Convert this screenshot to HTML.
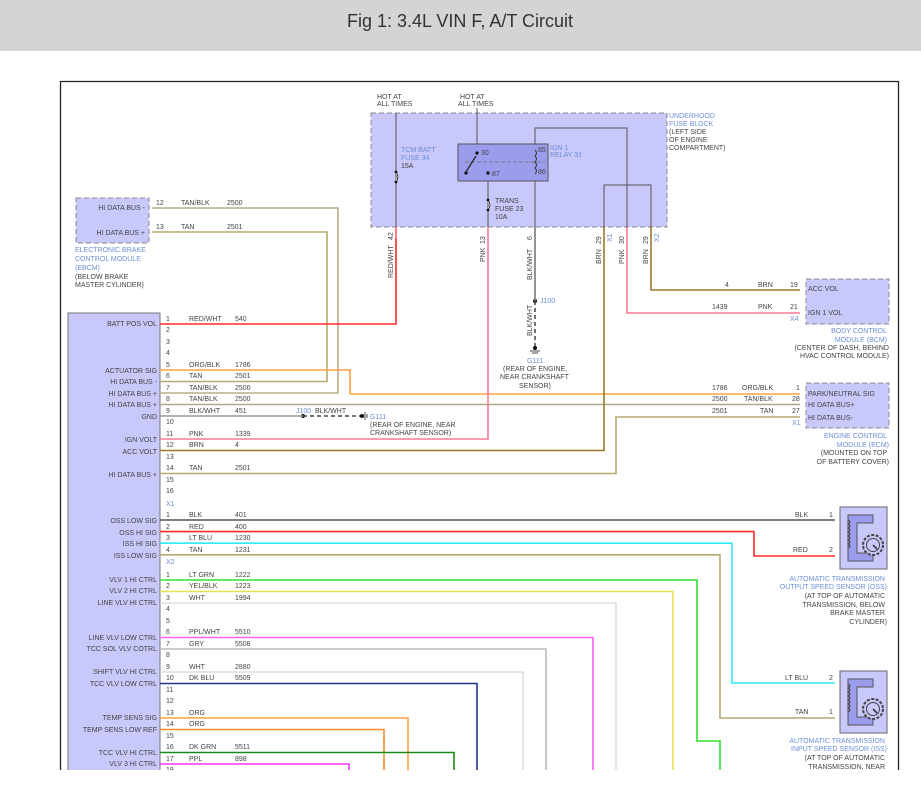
<!DOCTYPE html>
<html><head><meta charset="utf-8"><style>
html,body{margin:0;padding:0;background:#fff;width:921px;height:797px;overflow:hidden}
svg{display:block}
text{font-family:"Liberation Sans",Arial,sans-serif;font-size:7px;fill:#444}
.b{fill:#6b8fd6}
.t{font-size:18px;fill:#333}
</style></head><body>
<svg width="921" height="797" viewBox="0 0 921 797" xmlns="http://www.w3.org/2000/svg">
<rect x="0" y="0" width="921" height="51" fill="#d4d4d4"/>
<text x="460" y="27" text-anchor="middle" class="t">Fig 1: 3.4L VIN F, A/T Circuit</text>
<defs><clipPath id="c"><rect x="0" y="0" width="921" height="770"/></clipPath></defs>
<g clip-path="url(#c)">
<path d="M60.5 800 V81.5 H898.5 V800" fill="none" stroke="#222" stroke-width="1.3"/>

<!-- fuse block -->
<rect x="371" y="113" width="296" height="114" fill="#c8c8fa" stroke="#888" stroke-dasharray="5,3"/>
<text x="377" y="99" text-anchor="start">HOT AT</text><text x="377" y="106">ALL TIMES</text>
<text x="460" y="99">HOT AT</text><text x="458" y="106">ALL TIMES</text>
<text x="669" y="118" class="b">UNDERHOOD</text><text x="669" y="126" class="b">FUSE BLOCK</text><text x="669" y="134">(LEFT SIDE</text><text x="669" y="142">OF ENGINE</text><text x="669" y="150">COMPARTMENT)</text>
<rect x="458" y="144" width="90" height="37" fill="#9c9cec" stroke="#555"/>
<path d="M465 162 H545" stroke="#777" stroke-dasharray="4,2" fill="none"/>
<path d="M476 156 L466 172" stroke="#222" stroke-width="1.2"/>
<circle cx="477" cy="153" r="1.6" fill="#111"/><circle cx="466" cy="173" r="1.6" fill="#111"/><circle cx="488" cy="173" r="1.6" fill="#111"/>
<text x="481" y="155">30</text><text x="492" y="176">87</text><text x="538" y="152">85</text><text x="538" y="174">86</text>
<text x="550" y="150" class="b">IGN 1</text><text x="550" y="157" class="b">RELAY 31</text>
<path d="M535 150 q3 3 0 6 q3 3 0 6 q3 3 0 6 q3 3 0 6" stroke="#333" fill="none"/>
<g stroke="#555" fill="none" stroke-width="1">
<path d="M396 113 V227"/><path d="M477 108 V144"/><path d="M488 181 V227"/><path d="M535 144 V128 H627 V227"/><path d="M535 181 V227"/>
<path d="M604 227 V185 H651 V227"/>
</g>
<path d="M396 172 q4 5 0 10" stroke="#fff" stroke-width="2" fill="none"/>
<path d="M396 172 q4 5 0 10" stroke="#333" fill="none"/>
<circle cx="396" cy="172" r="1.4" fill="#111"/><circle cx="396" cy="182" r="1.4" fill="#111"/>
<text x="401" y="152" class="b">TCM BATT</text><text x="401" y="160" class="b">FUSE 34</text><text x="401" y="168">15A</text>
<path d="M488 200 q4 5 0 10" stroke="#fff" stroke-width="2" fill="none"/>
<path d="M488 200 q4 5 0 10" stroke="#333" fill="none"/>
<circle cx="488" cy="200" r="1.4" fill="#111"/><circle cx="488" cy="210" r="1.4" fill="#111"/>
<text x="495" y="203">TRANS</text><text x="495" y="211">FUSE 23</text><text x="495" y="219">10A</text>
<g fill="#444"><text transform="translate(393,240) rotate(-90)">42</text><text transform="translate(393,278) rotate(-90)">RED/WHT</text>
<text transform="translate(485,244) rotate(-90)">13</text><text transform="translate(485,262) rotate(-90)">PNK</text>
<text transform="translate(532,240) rotate(-90)">6</text><text transform="translate(532,280) rotate(-90)">BLK/WHT</text>
<text transform="translate(601,244) rotate(-90)">29</text><text transform="translate(601,264) rotate(-90)">BRN</text>
<text transform="translate(624,244) rotate(-90)">30</text><text transform="translate(624,264) rotate(-90)">PNK</text>
<text transform="translate(648,244) rotate(-90)">29</text><text transform="translate(648,264) rotate(-90)">BRN</text>
<text transform="translate(612,242) rotate(-90)" class="b">X1</text><text transform="translate(659,242) rotate(-90)" class="b">X2</text>
<text transform="translate(532,336) rotate(-90)">BLK/WHT</text></g>

<!-- EBCM -->
<rect x="76" y="198" width="73" height="45" fill="#c8c8fa" stroke="#888" stroke-dasharray="5,3"/>
<text x="145" y="210" text-anchor="end">HI DATA BUS -</text><text x="145" y="235" text-anchor="end">HI DATA BUS +</text>
<text x="75" y="252" class="b">ELECTRONIC BRAKE</text><text x="75" y="261" class="b">CONTROL MODULE</text><text x="75" y="270" class="b">(EBCM)</text><text x="75" y="279">(BELOW BRAKE</text><text x="75" y="287">MASTER CYLINDER)</text>
<text x="156" y="205">12</text><text x="181" y="205">TAN/BLK</text><text x="227" y="205">2500</text>
<text x="156" y="229">13</text><text x="181" y="229">TAN</text><text x="227" y="229">2501</text>

<!-- BCM -->
<rect x="806" y="279" width="83" height="45" fill="#c8c8fa" stroke="#888" stroke-dasharray="5,3"/>
<text x="808" y="291">ACC VOL</text><text x="808" y="315">IGN 1 VOL</text>
<text x="725" y="287">4</text><text x="758" y="287">BRN</text><text x="790" y="287">19</text>
<text x="712" y="309">1439</text><text x="758" y="309">PNK</text><text x="790" y="309">21</text><text x="790" y="321" class="b">X4</text>
<text x="887" y="333" text-anchor="end" class="b">BODY CONTROL</text><text x="887" y="342" text-anchor="end" class="b">MODULE (BCM)</text>
<text x="889" y="350" text-anchor="end">(CENTER OF DASH, BEHIND</text><text x="889" y="358" text-anchor="end">HVAC CONTROL MODULE)</text>

<!-- ECM -->
<rect x="806" y="383" width="83" height="45" fill="#c8c8fa" stroke="#888" stroke-dasharray="5,3"/>
<text x="808" y="396">PARK/NEUTRAL SIG</text><text x="808" y="407">HI DATA BUS+</text><text x="808" y="420">HI DATA BUS-</text>
<text x="712" y="390">1786</text><text x="742" y="390">ORG/BLK</text><text x="796" y="390">1</text>
<text x="712" y="401">2500</text><text x="744" y="401">TAN/BLK</text><text x="792" y="401">28</text>
<text x="712" y="413">2501</text><text x="760" y="413">TAN</text><text x="792" y="413">27</text><text x="792" y="425" class="b">X1</text>
<text x="887" y="438" text-anchor="end" class="b">ENGINE CONTROL</text><text x="889" y="447" text-anchor="end" class="b">MODULE (ECM)</text>
<text x="887" y="455" text-anchor="end">(MOUNTED ON TOP</text><text x="889" y="464" text-anchor="end">OF BATTERY COVER)</text>

<!-- G111 grounds -->
<circle cx="535" cy="301" r="2" fill="#111"/><text x="540" y="303" class="b">J100</text>
<path d="M535 301 V348" stroke="#444" stroke-width="1.5" stroke-dasharray="4,3"/>
<circle cx="535" cy="348" r="2" fill="#111"/><path d="M530 351 H540 M532 353 H538" stroke="#444"/>
<text x="527" y="363" class="b">G111</text><text x="503" y="371">(REAR OF ENGINE,</text><text x="500" y="379">NEAR CRANKSHAFT</text><text x="519" y="388">SENSOR)</text>
<circle cx="303" cy="416" r="2" fill="#111"/><text x="296" y="413" class="b">J100</text><text x="315" y="413">BLK/WHT</text>
<path d="M303 416 H361" stroke="#444" stroke-width="1.5" stroke-dasharray="4,3"/>
<circle cx="362" cy="416" r="2" fill="#111"/><path d="M365 412 V420 M367 414 V418" stroke="#444"/>
<text x="370" y="419" class="b">G111</text><text x="370" y="427">(REAR OF ENGINE, NEAR</text><text x="370" y="435">CRANKSHAFT SENSOR)</text>

<!-- TCM -->
<rect x="68" y="313" width="92" height="470" fill="#c8c8fa" stroke="#777"/>

<!-- wires -->
<g fill="none" stroke-width="1.6">
<path d="M152 208 H338 V393 H160" stroke="#b9ad8a"/>
<path d="M152 232 H327 V381.5 H160" stroke="#b8a870"/>
<path d="M396 227 V324 H160" stroke="#ff2a2a"/>
<path d="M396 227 V238" stroke="#ff8090"/>
<path d="M160 370 H350 V394 H800" stroke="#ffa040"/>
<path d="M160 404.5 H800" stroke="#b0a888"/>
<path d="M160 416 H303" stroke="#999"/>
<path d="M535 227 V301" stroke="#777"/>
<path d="M160 439 H488 V227" stroke="#ff7a94"/>
<path d="M160 450.5 H604 V227" stroke="#9a7a2a"/>
<path d="M160 473.5 H616 V417 H800" stroke="#b8a870"/>
<path d="M651 227 V290 H800" stroke="#9a7a2a"/>
<path d="M627 227 V313 H800" stroke="#ff7a94"/>
<path d="M160 520 H835" stroke="#555"/>
<path d="M160 531.6 H754 V556 H835" stroke="#ff2a2a"/>
<path d="M160 543.2 H732 V683 H835" stroke="#30e8f8"/>
<path d="M160 554.8 H720 V718 H835" stroke="#b8a870"/>
<path d="M160 580 H697 V741 H720 V790" stroke="#30e030"/>
<path d="M160 591.5 H673 V790" stroke="#e8e050"/>
<path d="M160 603 H616 V790" stroke="#dddddd"/>
<path d="M160 637.5 H593 V790" stroke="#ff60ff"/>
<path d="M160 649 H546 V790" stroke="#bbbbbb"/>
<path d="M160 672 H523 V790" stroke="#dddddd"/>
<path d="M160 683.5 H477 V790" stroke="#22358a"/>
<path d="M160 718 H408 V790" stroke="#ffa040"/>
<path d="M160 729.5 H384 V790" stroke="#ff8a30"/>
<path d="M160 752.5 H454 V790" stroke="#1a8a1a"/>
<path d="M160 764 H349 V790" stroke="#ff30ff"/>
</g>

<!-- TCM labels -->
<g text-anchor="end">
<text x="157" y="326">BATT POS VOL</text><text x="157" y="373">ACTUATOR SIG</text><text x="157" y="384">HI DATA BUS -</text>
<text x="157" y="396">HI DATA BUS +</text><text x="157" y="407">HI DATA BUS +</text><text x="157" y="419">GND</text>
<text x="157" y="442">IGN VOLT</text><text x="157" y="454">ACC VOLT</text><text x="157" y="477">HI DATA BUS +</text>
<text x="157" y="523">OSS LOW SIG</text><text x="157" y="535">OSS HI SIG</text><text x="157" y="546">ISS HI SIG</text><text x="157" y="558">ISS LOW SIG</text>
<text x="157" y="582">VLV 1 HI CTRL</text><text x="157" y="593">VLV 2 HI CTRL</text><text x="157" y="605">LINE VLV HI CTRL</text>
<text x="157" y="640">LINE VLV LOW CTRL</text><text x="157" y="651">TCC SOL VLV COTRL</text><text x="157" y="674">SHIFT VLV HI CTRL</text>
<text x="157" y="686">TCC VLV LOW CTRL</text><text x="157" y="720">TEMP SENS SIG</text><text x="157" y="732">TEMP SENS LOW REF</text>
<text x="157" y="755">TCC VLV HI CTRL</text><text x="157" y="766">VLV 3 HI CTRL</text>
</g>
<g>
<text x="166" y="321">1</text><text x="166" y="332">2</text><text x="166" y="344">3</text><text x="166" y="355">4</text><text x="166" y="367">5</text><text x="166" y="378">6</text><text x="166" y="390">7</text><text x="166" y="401">8</text><text x="166" y="413">9</text><text x="166" y="424">10</text><text x="166" y="436">11</text><text x="166" y="447">12</text><text x="166" y="459">13</text><text x="166" y="470">14</text><text x="166" y="482">15</text><text x="166" y="493">16</text><text x="166" y="506" class="b">X1</text>
<text x="166" y="517">1</text><text x="166" y="529">2</text><text x="166" y="540">3</text><text x="166" y="552">4</text><text x="166" y="564" class="b">X2</text>
<text x="166" y="577">1</text><text x="166" y="588">2</text><text x="166" y="600">3</text><text x="166" y="611">4</text><text x="166" y="623">5</text><text x="166" y="634">6</text><text x="166" y="646">7</text><text x="166" y="657">8</text><text x="166" y="669">9</text><text x="166" y="680">10</text><text x="166" y="692">11</text><text x="166" y="703">12</text><text x="166" y="715">13</text><text x="166" y="726">14</text><text x="166" y="738">15</text><text x="166" y="749">16</text><text x="166" y="761">17</text><text x="166" y="772">18</text>
<text x="189" y="321">RED/WHT</text><text x="235" y="321">540</text>
<text x="189" y="367">ORG/BLK</text><text x="235" y="367">1786</text>
<text x="189" y="378">TAN</text><text x="235" y="378">2501</text>
<text x="189" y="390">TAN/BLK</text><text x="235" y="390">2500</text>
<text x="189" y="401">TAN/BLK</text><text x="235" y="401">2500</text>
<text x="189" y="413">BLK/WHT</text><text x="235" y="413">451</text>
<text x="189" y="436">PNK</text><text x="235" y="436">1339</text>
<text x="189" y="447">BRN</text><text x="235" y="447">4</text>
<text x="189" y="470">TAN</text><text x="235" y="470">2501</text>
<text x="189" y="517">BLK</text><text x="235" y="517">401</text>
<text x="189" y="529">RED</text><text x="235" y="529">400</text>
<text x="189" y="540">LT BLU</text><text x="235" y="540">1230</text>
<text x="189" y="552">TAN</text><text x="235" y="552">1231</text>
<text x="189" y="577">LT GRN</text><text x="235" y="577">1222</text>
<text x="189" y="588">YEL/BLK</text><text x="235" y="588">1223</text>
<text x="189" y="600">WHT</text><text x="235" y="600">1994</text>
<text x="189" y="634">PPL/WHT</text><text x="235" y="634">5510</text>
<text x="189" y="646">GRY</text><text x="235" y="646">5508</text>
<text x="189" y="669">WHT</text><text x="235" y="669">2880</text>
<text x="189" y="680">DK BLU</text><text x="235" y="680">5509</text>
<text x="189" y="715">ORG</text>
<text x="189" y="726">ORG</text>
<text x="189" y="749">DK GRN</text><text x="235" y="749">5511</text>
<text x="189" y="761">PPL</text><text x="235" y="761">898</text>
</g>

<!-- sensors -->
<g id="oss">
<rect x="840" y="507" width="47" height="62" fill="#c8c8fa" stroke="#666"/>
<path d="M848 515 H873 V523 H857 V553 H873 V561 H848 Z" fill="#9c9cec" stroke="#555"/>
<circle cx="873" cy="545" r="10" fill="#c8c8fa" stroke="#444" stroke-dasharray="3,1.5" stroke-width="2"/>
<circle cx="873" cy="545" r="6.5" fill="none" stroke="#444"/>
<path d="M873 545 L877 549" stroke="#222" stroke-width="1.4"/>
<path d="M848 520 q4 2 0 4 q4 2 0 4 q4 2 0 4 q4 2 0 4 q4 2 0 4 q4 2 0 4 q4 2 0 4" fill="none" stroke="#444"/>
</g>
<use href="#oss" transform="translate(0,164)"/>
<text x="795" y="517">BLK</text><text x="829" y="517">1</text><text x="793" y="552">RED</text><text x="829" y="552">2</text>
<text x="785" y="680">LT BLU</text><text x="829" y="680">2</text><text x="795" y="714">TAN</text><text x="829" y="714">1</text>
<g text-anchor="end">
<text x="885" y="581" class="b">AUTOMATIC TRANSMISSION</text><text x="887" y="589" class="b">OUTPUT SPEED SENSOR (OSS)</text>
<text x="885" y="598">(AT TOP OF AUTOMATIC</text><text x="885" y="607">TRANSMISSION, BELOW</text><text x="885" y="615">BRAKE MASTER</text><text x="887" y="624">CYLINDER)</text>
<text x="885" y="743" class="b">AUTOMATIC TRANSMISSION</text><text x="887" y="751" class="b">INPUT SPEED SENSOR (ISS)</text>
<text x="885" y="760">(AT TOP OF AUTOMATIC</text><text x="885" y="769">TRANSMISSION, NEAR</text>
</g>
</g>
</svg>
</body></html>
